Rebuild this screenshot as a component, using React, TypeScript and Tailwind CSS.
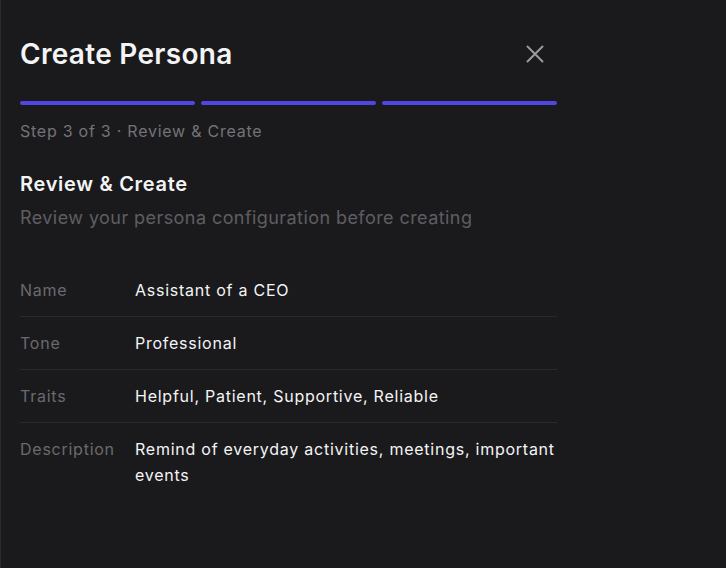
import React from "react";

const DETAILS = [
  { label: "Name", value: "Assistant of a CEO" },
  { label: "Tone", value: "Professional" },
  { label: "Traits", value: "Helpful, Patient, Supportive, Reliable" },
  { label: "Description", value: "Remind of everyday activities, meetings, important events" },
];

export default function App() {
  return (
    <div className="min-h-screen w-full bg-[#1a1a1d] border-l border-[#2b2b2f] font-['Inter',sans-serif] antialiased">
      <div className="ml-[19px] w-[537px] pt-[36px]">
        {/* Header */}
        <div className="flex items-center justify-between">
          <h1 className="text-[28px] leading-[36px] font-semibold text-[#f4f4f5] tracking-[0.3px]">
            Create Persona
          </h1>
          <button className="p-2 mr-[5px] text-[#9a9a9e]">
            <svg width="18" height="18" viewBox="0 0 18 18" fill="none" stroke="currentColor" strokeWidth="2" strokeLinecap="round">
              <path d="M1.5 1.5 L16.5 16.5 M16.5 1.5 L1.5 16.5" />
            </svg>
          </button>
        </div>

        {/* Progress */}
        <div className="mt-[29px] grid grid-cols-3 gap-[6px]">
          <div className="h-1 rounded-full bg-[#4f46e5]" />
          <div className="h-1 rounded-full bg-[#4f46e5]" />
          <div className="h-1 rounded-full bg-[#4f46e5]" />
        </div>
        <p className="mt-[14px] text-base leading-6 tracking-[0.75px] text-[#737377]">
          Step 3 of 3 · Review &amp; Create
        </p>

        {/* Section */}
        <h2 className="mt-[27px] text-[20px] leading-[28px] font-semibold tracking-[0.7px] text-[#f4f4f5]">
          Review &amp; Create
        </h2>
        <p className="mt-[6px] text-[18px] leading-[28px] tracking-[0.43px] text-[#5e5e62]">
          Review your persona configuration before creating
        </p>

        <div className="mt-[32px]">
          {DETAILS.map((row, i) => (
            <div
              key={row.label}
              className={
                "grid grid-cols-[115px_1fr] py-[13px] text-base leading-[26px] tracking-[0.75px] " +
                (i < DETAILS.length - 1 ? "border-b border-[#2a2a2e]" : "")
              }
            >
              <span className="text-[#6a6a6e]">{row.label}</span>
              <span className="text-[#f4f4f5]">{row.value}</span>
            </div>
          ))}
        </div>
      </div>
    </div>
  );
}
